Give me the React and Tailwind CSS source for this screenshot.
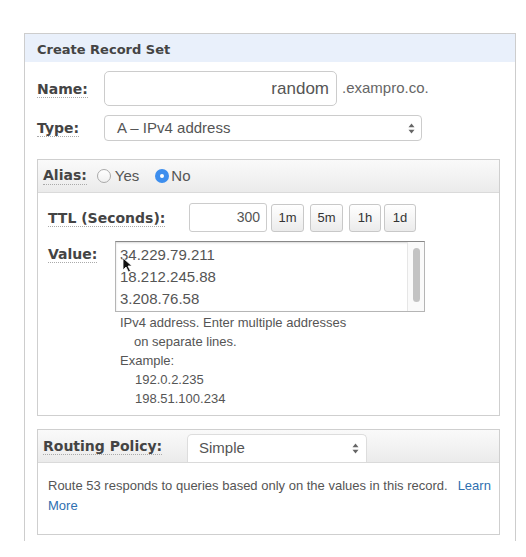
import React from 'react';

const Label = ({ children, className = '' }) => (
  <span
    className={`font-['DejaVu_Sans',sans-serif] font-bold text-[14px] leading-[17px] text-[#444] border-b border-dotted border-[#aaa] ${className}`}
  >
    {children}
  </span>
);

const UpDown = () => (
  <svg width="7" height="11" viewBox="0 0 7 11" className="shrink-0">
    <path d="M3.5 0.5 L6.5 4.2 L0.5 4.2 Z" fill="#666" />
    <path d="M3.5 10.5 L6.5 6.8 L0.5 6.8 Z" fill="#666" />
  </svg>
);

const TtlButton = ({ children, className = '' }) => (
  <div
    className={`h-[28px] flex items-center justify-center rounded-[3px] border border-[#c8c8c8] bg-gradient-to-b from-white to-[#ebebeb] text-[13px] text-[#333] ${className}`}
  >
    {children}
  </div>
);

export default function App() {
  return (
    <div className="w-[526px] h-[557px] bg-white font-['Liberation_Sans',Arial,sans-serif] text-[#555] pt-[33px] pl-[24px]">
      {/* Outer panel */}
      <div className="w-[492px] h-[508px] border-x border-t border-[#cdcdcd]">
        <div className="h-[28px] bg-[#e9f0fb] flex items-center px-[12px] pt-[3px]">
          <span className="font-['DejaVu_Sans',sans-serif] font-bold text-[13px] text-[#444]">
            Create Record Set
          </span>
        </div>

        <div className="pl-[12px] pt-[9px]">
          {/* Name */}
          <div className="flex items-center">
            <div className="w-[67px]">
              <Label>Name:</Label>
            </div>
            <div className="w-[233px] h-[35px] rounded-[5px] border border-[#ccc] flex items-center justify-end pr-[7px] text-[17px] text-[#555]">
              random
            </div>
            <span className="ml-[5px] text-[15px] text-[#666]">.exampro.co.</span>
          </div>

          {/* Type */}
          <div className="flex items-center mt-[9px]">
            <div className="w-[67px]">
              <Label>Type:</Label>
            </div>
            <div className="w-[318px] h-[26px] rounded-[4px] border border-[#ccc] flex items-center justify-between pl-[12px] pr-[6px] text-[15px] text-[#555]">
              <span>A – IPv4 address</span>
              <UpDown />
            </div>
          </div>

          {/* Alias panel */}
          <div className="mt-[18px] w-[463px] border border-[#cfcfcf]">
            <div className="h-[33px] bg-gradient-to-b from-[#fafafa] to-[#ebebeb] border-b border-[#dadada] flex items-center pl-[5px]">
              <Label>Alias:</Label>
              <span className="ml-[10px] w-[14px] h-[14px] rounded-full border border-[#aaa] bg-gradient-to-b from-white to-[#f0f0f0]" />
              <span className="ml-[4px] text-[15px] text-[#555]">Yes</span>
              <span className="ml-[16px] w-[14px] h-[14px] rounded-full bg-[#3d8eee] flex items-center justify-center">
                <span className="w-[4px] h-[4px] rounded-full bg-white" />
              </span>
              <span className="ml-[2px] text-[15px] text-[#555]">No</span>
            </div>

            <div className="pl-[10px] pt-[10px] pb-[7px]">
              {/* TTL */}
              <div className="flex items-center">
                <div className="w-[141px]">
                  <Label>TTL (Seconds):</Label>
                </div>
                <div className="w-[78px] h-[29px] rounded-[3px] border border-[#ccc] flex items-center justify-end pr-[6px] text-[14px] text-[#555]">
                  300
                </div>
                <TtlButton className="ml-[4px] w-[33px]">1m</TtlButton>
                <TtlButton className="ml-[6px] w-[33px]">5m</TtlButton>
                <TtlButton className="ml-[6px] w-[32px]">1h</TtlButton>
                <TtlButton className="ml-[3px] w-[32px]">1d</TtlButton>
              </div>

              {/* Value */}
              <div className="flex mt-[9px]">
                <div className="w-[67px] pt-[1px]">
                  <Label>Value:</Label>
                </div>
                <div className="flex flex-col">
                  <div className="relative w-[310px] h-[71px] border border-[#b5b5b5] border-t-[#888] flex shadow-[inset_0_1px_2px_rgba(0,0,0,0.15)]">
                    <div className="flex-1 pl-[4px] pt-[2px] text-[15px] leading-[22px] text-[#555]">
                      <div>34.229.79.211</div>
                      <div>18.212.245.88</div>
                      <div>3.208.76.58</div>
                    </div>
                    <div className="w-[17px] border-l border-[#e6e6e6] bg-[#fafafa] flex justify-center pt-[6px]">
                      <div className="w-[7px] h-[54px] rounded-full bg-[#c3c3c3]" />
                    </div>
                    {/* mouse cursor */}
                    <svg
                      width="12"
                      height="16"
                      viewBox="0 0 12 16"
                      className="absolute left-[6px] top-[15px]"
                    >
                      <path
                        d="M1 1 L1 13 L4 10 L6.5 15 L8.5 14 L6 9 L10 9 Z"
                        fill="#111"
                        stroke="#fff"
                        strokeWidth="0.8"
                      />
                    </svg>
                  </div>
                  <div className="mt-[1px] pl-[5px] text-[13px] leading-[19px] text-[#555]">
                    <div>IPv4 address. Enter multiple addresses</div>
                    <div className="pl-[14px]">on separate lines.</div>
                    <div>Example:</div>
                    <div className="pl-[15px]">192.0.2.235</div>
                    <div className="pl-[15px]">198.51.100.234</div>
                  </div>
                </div>
              </div>
            </div>
          </div>

          {/* Routing panel */}
          <div className="mt-[13px] w-[463px] border border-[#cfcfcf]">
            <div className="h-[33px] bg-gradient-to-b from-[#fafafa] to-[#ebebeb] border-b border-[#dadada] flex items-end pl-[5px]">
              <div className="w-[144px] self-center">
                <Label>Routing Policy:</Label>
              </div>
              <div className="w-[180px] h-[28px] rounded-t-[5px] border-x border-t border-[#ddd] bg-white flex items-center justify-between pl-[11px] pr-[7px] text-[15px] text-[#555]">
                <span>Simple</span>
                <UpDown />
              </div>
            </div>
            <div className="pl-[10px] pr-[6px] pt-[13px] pb-[18px] text-[13px] leading-[20px] text-[#555]">
              <div className="flex">
                <span>Route 53 responds to queries based only on the values in this record.</span>
                <span className="ml-[10px] text-[#2f6fb0]">Learn</span>
              </div>
              <div className="text-[#2f6fb0]">More</div>
            </div>
          </div>
        </div>
      </div>
    </div>
  );
}
